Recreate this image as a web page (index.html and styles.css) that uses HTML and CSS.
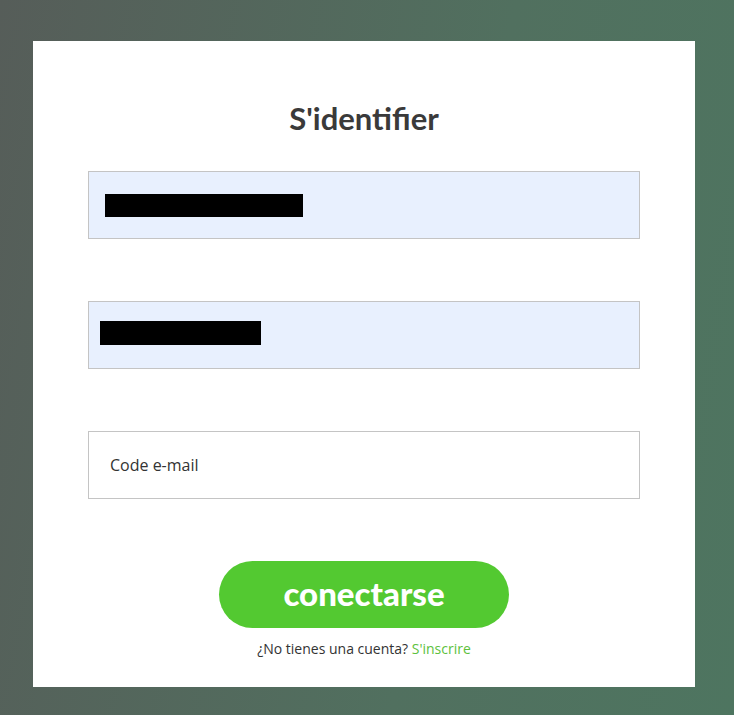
FILE: index.html
```html
<!DOCTYPE html>
<html lang="es">
<head>
<meta charset="utf-8">
<title>S'identifier</title>
<link rel="stylesheet" href="styles.css">
</head>
<body>
<main class="card">
  <h1 class="title">S'identifier</h1>
  <form class="form">
    <div class="field field-filled"><span class="redact redact-1"></span></div>
    <div class="field field-filled"><span class="redact redact-2"></span></div>
    <input class="field field-input" type="text" placeholder="Code e-mail">
    <button class="btn" type="button">conectarse</button>
    <p class="signup">¿No tienes una cuenta? <a href="#" class="link">S'inscrire</a></p>
  </form>
</main>
</body>
</html>
```
FILE: styles.css
```css
* { box-sizing: border-box; }
html, body { margin: 0; }
body {
  width: 734px;
  height: 715px;
  padding: 41px 39px 28px 33px;
  background: linear-gradient(100deg, #565d59 0%, #51705f 60%, #4e7560 100%);
  font-family: "Open Sans", "Liberation Sans", sans-serif;
  overflow: hidden;
}
.card {
  width: 662px;
  height: 646px;
  background: #fff;
  padding: 60px 55px 0 55px;
}
.title {
  margin: 0;
  text-align: center;
  font-family: "Lato", "DejaVu Sans", sans-serif;
  font-weight: 700;
  font-size: 31px;
  line-height: 34px;
  color: #3a3a3a;
}
.form {
  margin-top: 36px;
  display: flex;
  flex-direction: column;
  align-items: center;
  gap: 62px;
}
.field {
  width: 552px;
  height: 68px;
  border: 1px solid #c4c4c4;
  display: flex;
  align-items: center;
}
.field-filled { background: #e8f0fe; }
.redact { display: block; background: #000; }
.redact-1 { width: 198px; height: 23px; margin-left: 16px; }
.redact-2 { width: 161px; height: 24px; margin-left: 11px; margin-top: -4px; }
.field-input {
  padding: 0 21px;
  font-family: "Open Sans", sans-serif;
  font-size: 16px;
  color: #333;
  background: #fff;
  outline: none;
}
.field-input::placeholder { color: #333; opacity: 1; }
.btn {
  width: 290px;
  height: 67px;
  border: 0;
  border-radius: 34px;
  background: #53c931;
  color: #fff;
  font-family: "Lato", "DejaVu Sans", sans-serif;
  font-weight: 900;
  font-size: 33px;
  padding: 0 0 4px;
  cursor: pointer;
}
.signup {
  margin: -50px 0 0;
  font-size: 14px;
  line-height: 18px;
  color: #333;
}
.link { color: #5cc13d; text-decoration: none; }
```
